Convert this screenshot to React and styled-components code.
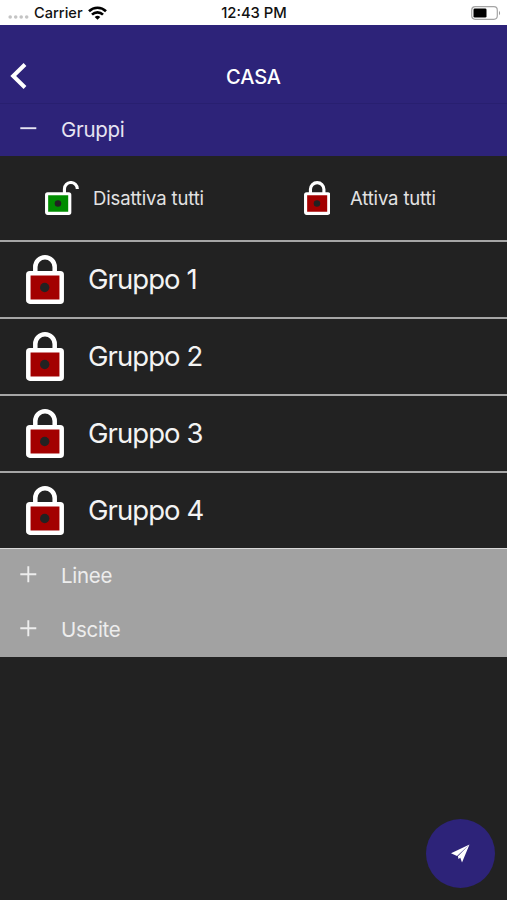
import React from 'react';
import styled, { createGlobalStyle } from 'styled-components';

const GlobalStyle = createGlobalStyle`
  * {
    box-sizing: border-box;
  }

  body {
    margin: 0;
    background: #222;
    font-family: Inter, 'Liberation Sans', sans-serif;
  }

  svg {
    display: block;
    flex-shrink: 0;
  }
`;

const Screen = styled.div`
  position: relative;
  width: 507px;
  height: 900px;
  overflow: hidden;
  background: #222;
  color: #f0f0f0;
`;

const StatusBar = styled.div`
  display: grid;
  grid-template-columns: 1fr auto 1fr;
  align-items: center;
  height: 25px;
  padding: 0 6px 0 8px;
  background: #fff;
  color: #111;
  font-weight: 500;
`;

const StatusLeft = styled.div`
  display: flex;
  align-items: center;
  gap: 5px;
`;

const Carrier = styled.span`
  width: 49px;
  font-size: 14.6px;
`;

const StatusTime = styled.span`
  padding-right: 1px;
  font-size: 14.8px;
`;

const StatusRight = styled.div`
  display: flex;
  justify-content: flex-end;
`;

const Header = styled.header`
  display: grid;
  grid-template-columns: 60px 1fr 60px;
  align-items: center;
  height: 79px;
  padding-top: 23px;
  background: #2d2379;
  border-bottom: 1px solid #281f70;
`;

const BackButton = styled.button`
  padding: 0 0 0 10px;
  border: 0;
  background: none;
`;

const Title = styled.h1`
  margin: 0;
  padding-top: 3px;
  color: #fff;
  font-size: 20px;
  font-weight: 550;
  letter-spacing: -0.1px;
  text-align: center;
`;

const SectionHeader = styled.div`
  display: flex;
  align-items: center;
  gap: 24px;
  height: ${(props) => (props.$open ? '52px' : '54px')};
  padding: 0 0 1px 20px;
  background: ${(props) => (props.$open ? '#2d2379' : '#a2a2a2')};
  color: ${(props) => (props.$open ? '#e6e4f2' : '#ededed')};
`;

const SectionLabel = styled.span`
  font-size: 20.5px;
  line-height: 24px;
  letter-spacing: -0.3px;
`;

const Actions = styled.div`
  display: grid;
  grid-template-columns: 259px 1fr;
  height: 84px;
`;

const Action = styled.div`
  display: flex;
  align-items: center;
  padding-left: 45px;
`;

const ActionIcon = styled.div`
  width: ${(props) => props.$width};
`;

const ActionLabel = styled.span`
  font-size: 18.5px;
  letter-spacing: -0.15px;
  color: #e2e2e2;
`;

const GroupRow = styled.div`
  display: flex;
  align-items: center;
  gap: 24px;
  height: 77px;
  padding: 0 0 1px 26px;
  border-top: 2px solid #a6a6a6;
`;

const GroupName = styled.span`
  padding-bottom: 1px;
  font-size: 27.5px;
  line-height: 32px;
  letter-spacing: -0.95px;
  color: #f3f3f3;
`;

const Collapsed = styled.div`
  height: 109px;
  border-top: 1px solid #d8d8d8;
  background: #a2a2a2;
`;

const SendButton = styled.button`
  position: absolute;
  left: 426px;
  top: 819px;
  display: flex;
  align-items: center;
  justify-content: center;
  width: 69px;
  height: 69px;
  padding: 0;
  border: 0;
  border-radius: 50%;
  background: #2d2379;
`;

const Lock = ({ height = 49, open = false }) => {
  const width = open ? 49 : 38;

  return (
    <svg width={(width * height) / 49} height={height} viewBox={`0 0 ${width} 49`} fill="none">
      <path
        d={open ? 'M28 18V11.5a9.3 9.3 0 0 1 18.6 0' : 'M9.3 18V12a9.7 9.7 0 0 1 19.4 0v6'}
        stroke="#fff"
        strokeWidth="4.5"
      />
      <rect x="2.3" y="18.3" width="33.4" height="28.4" rx="1.5" fill={open ? '#008c00' : '#a30000'} stroke="#fff" strokeWidth="4.5" />
      <circle cx="18.7" cy="32.5" r="4.7" fill="#222" />
    </svg>
  );
};

const Toggle = ({ open = false }) => (
  <svg width="17" height="20" viewBox="0 0 17 20" stroke="currentColor" strokeWidth="1.9">
    <path d={open ? 'M.3 8.2h16' : 'M.3 8.2h16M8.3.2v16'} />
  </svg>
);

const SignalDots = () => (
  <svg width="21" height="14" viewBox="0 0 21 14" fill="#c4c4c4">
    <circle cx="2.2" cy="11" r="1.8" />
    <circle cx="7.7" cy="11" r="1.8" />
    <circle cx="13.2" cy="11" r="1.8" />
    <circle cx="18.7" cy="11" r="1.8" />
  </svg>
);

const Wifi = () => (
  <svg width="19" height="14" viewBox="0 0 19 14" fill="none" stroke="#000" strokeWidth="2.6">
    <path d="M1 5.2a12.2 12.2 0 0 1 17 0M4 8.6a7.8 7.8 0 0 1 11 0" />
    <path d="M9.5 13.7 6.7 11a4 4 0 0 1 5.6 0z" fill="#000" stroke="none" />
  </svg>
);

const Battery = () => (
  <svg width="30" height="14" viewBox="0 0 30 14">
    <rect x=".7" y=".7" width="25.6" height="12.6" rx="3.5" fill="#fff" stroke="#a5a5a5" strokeWidth="1.2" />
    <rect x="2.5" y="2.5" width="13" height="9" rx="1.3" fill="#000" />
    <path d="M28 4.7q2.2 2.3 0 4.6z" fill="#999" />
  </svg>
);

const groups = ['Gruppo 1', 'Gruppo 2', 'Gruppo 3', 'Gruppo 4'];

const App = () => {
  return (
    <>
      <GlobalStyle />
      <Screen>
        <StatusBar>
          <StatusLeft>
            <SignalDots />
            <Carrier>Carrier</Carrier>
            <Wifi />
          </StatusLeft>
          <StatusTime>12:43 PM</StatusTime>
          <StatusRight>
            <Battery />
          </StatusRight>
        </StatusBar>

        <Header>
          <BackButton aria-label="Indietro">
            <svg width="17" height="26" viewBox="0 0 17 26" fill="none" stroke="#fff" strokeWidth="4">
              <path d="M15 1.5 3.2 13 15 24.5" />
            </svg>
          </BackButton>
          <Title>CASA</Title>
        </Header>

        <SectionHeader $open>
          <Toggle open />
          <SectionLabel>Gruppi</SectionLabel>
        </SectionHeader>

        <Actions>
          <Action>
            <ActionIcon $width="48px">
              <Lock height={34} open />
            </ActionIcon>
            <ActionLabel>Disattiva tutti</ActionLabel>
          </Action>
          <Action>
            <ActionIcon $width="46px">
              <Lock height={34} />
            </ActionIcon>
            <ActionLabel>Attiva tutti</ActionLabel>
          </Action>
        </Actions>

        {groups.map((name) => (
          <GroupRow key={name}>
            <Lock />
            <GroupName>{name}</GroupName>
          </GroupRow>
        ))}

        <Collapsed>
          <SectionHeader>
            <Toggle />
            <SectionLabel>Linee</SectionLabel>
          </SectionHeader>
          <SectionHeader>
            <Toggle />
            <SectionLabel>Uscite</SectionLabel>
          </SectionHeader>
        </Collapsed>

        <SendButton aria-label="Invia">
          <svg width="19" height="19" viewBox="0 0 19 19" fill="#fff">
            <path d="M18.5.5 0 9.3l6 2.6zM18.5.5 6.9 12.3l.6 2.6 1.8-1.2 1.7 4.8z" />
          </svg>
        </SendButton>
      </Screen>
    </>
  );
};

export default App;
